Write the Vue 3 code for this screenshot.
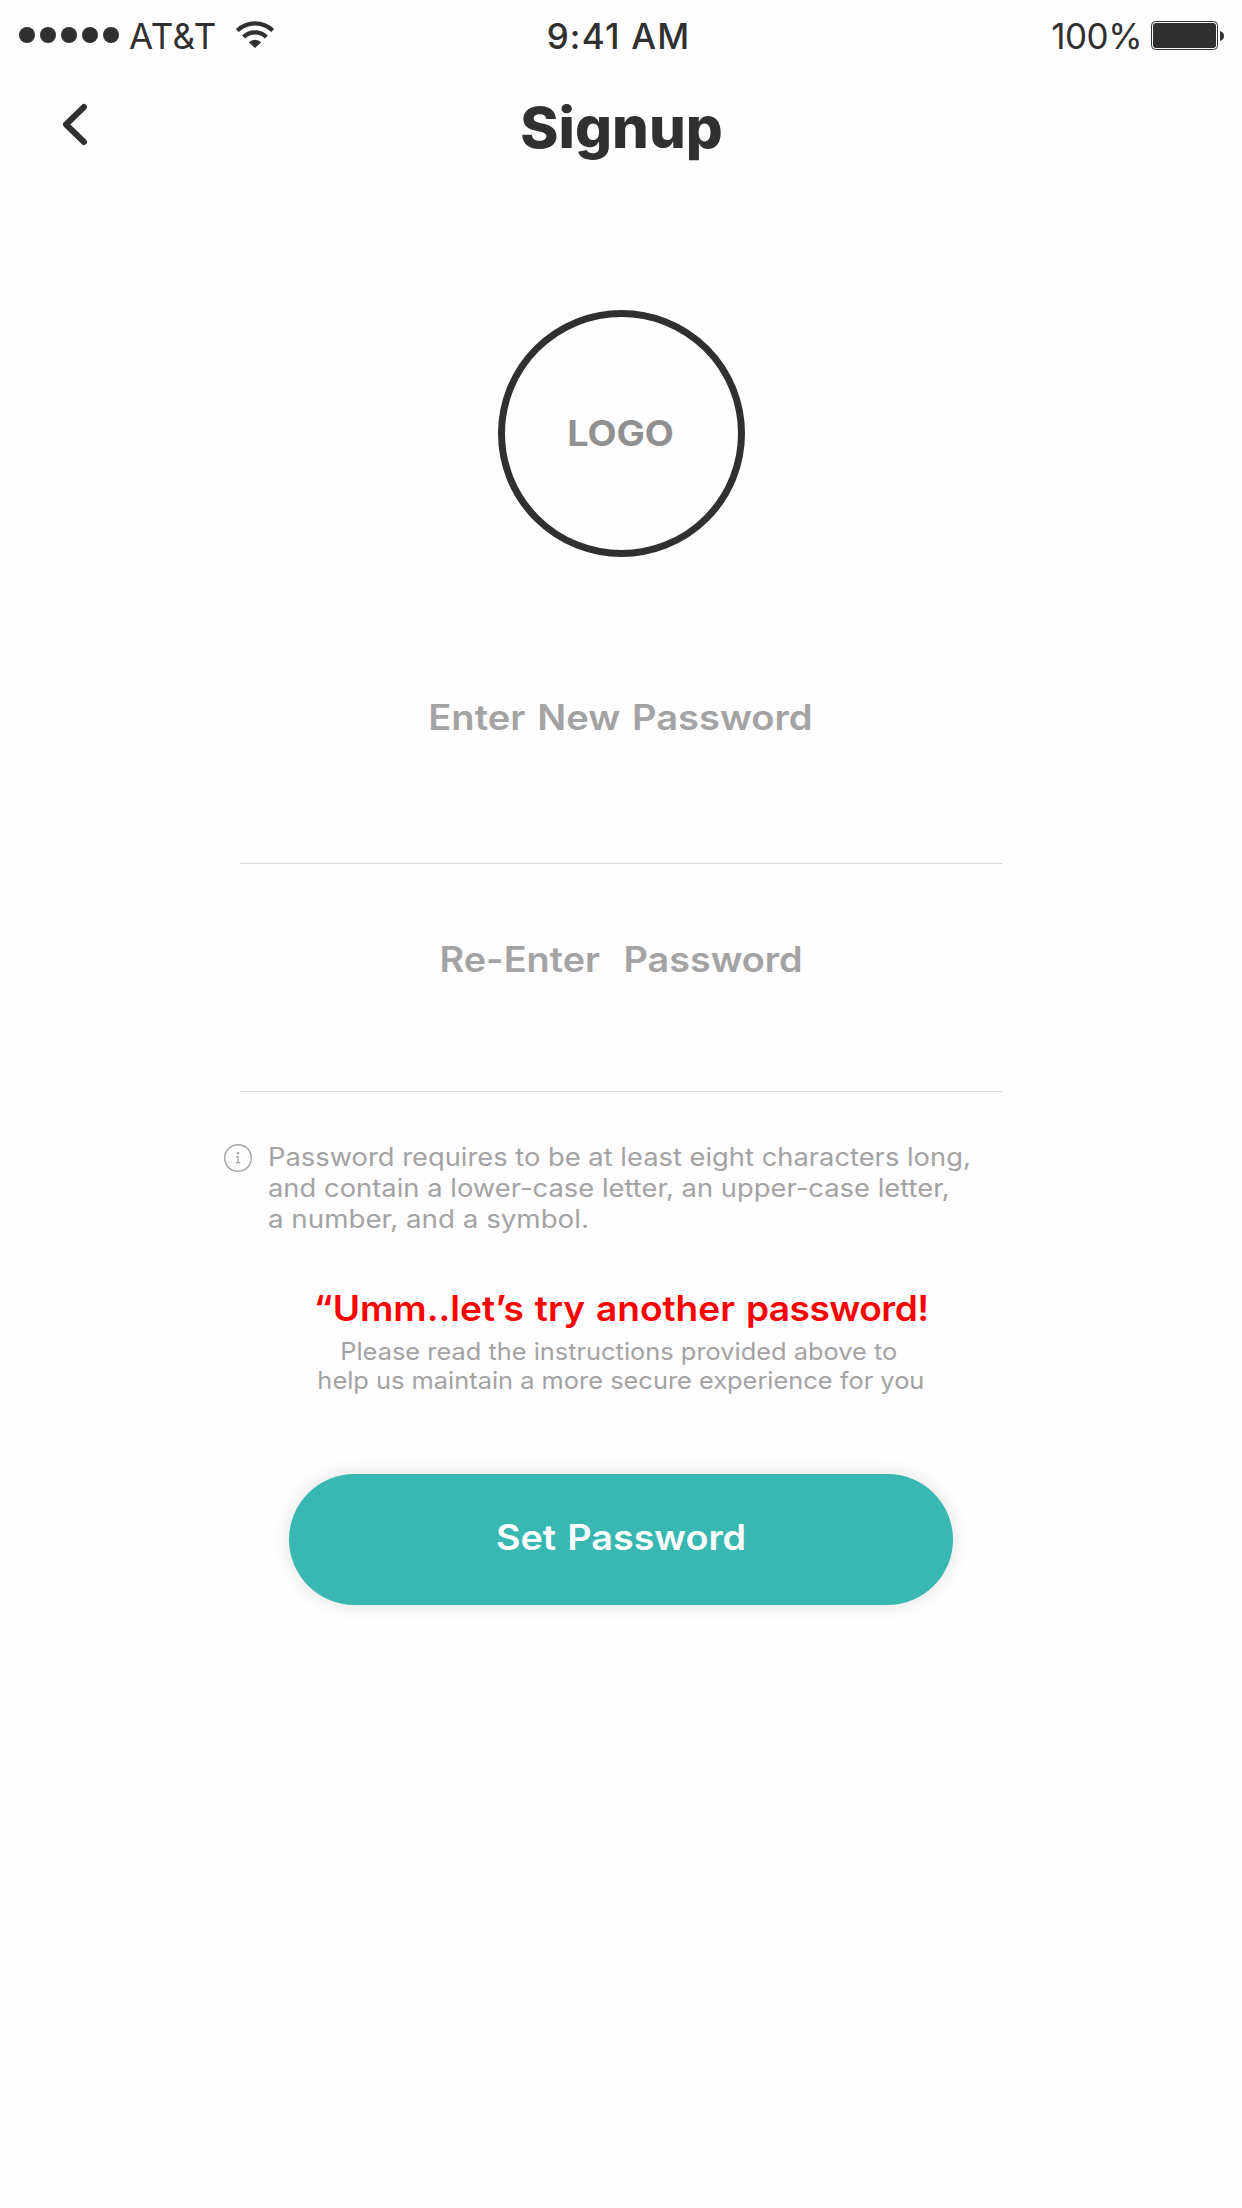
<script setup>
const requirements = [
  { text: 'Password requires to be at least eight characters long,', cls: 'tip-a' },
  { text: 'and contain a lower-case letter, an upper-case letter,', cls: 'tip-b' },
  { text: 'a number, and a symbol.', cls: 'tip-c' },
]
const help = [
  'Please read the instructions provided above to',
  'help us maintain a more secure experience for you',
]
</script>

<template>
  <div class="screen">
    <div class="status">
      <div class="carrier">
        <div class="signal"><i v-for="n in 5" :key="n"></i></div>
        <span class="network">AT&amp;T</span>
        <svg class="wifi" width="38" height="27" viewBox="0 0 38 27">
          <g fill="none" stroke="#303030" stroke-width="4.2">
            <path d="M1.3 9.6A25.3 25.3 0 0 1 36.7 9.6" />
            <path d="M7.6 16A16.2 16.2 0 0 1 30.4 16" />
          </g>
          <path d="M12.8 21.2A8.9 8.9 0 0 1 25.2 21.2L19 27Z" fill="#303030" />
        </svg>
      </div>
      <span class="time">9:41 AM</span>
      <div class="power">
        <span class="percent">100%</span>
        <svg class="battery" width="73" height="29" viewBox="0 0 73 29">
          <rect x="0.5" y="0.5" width="66" height="28" rx="4" fill="#fefefe" stroke="#303030" />
          <rect x="2" y="2" width="63" height="25" rx="3" fill="#303030" />
          <path d="M69 10C72 11 73 12.800 73 15S72 19 69 20Z" fill="#303030" />
        </svg>
      </div>
    </div>

    <header class="header">
      <svg class="back" width="26" height="43" viewBox="0 0 26 43">
        <path d="M22 4L4 21.500L22 39" fill="none" stroke="#303030" stroke-width="6" stroke-linecap="round" stroke-linejoin="round" />
      </svg>
      <h1>Signup</h1>
      <span></span>
    </header>

    <main>
      <div class="logo"><span>LOGO</span></div>

      <div class="field first"><label>Enter New Password</label></div>
      <div class="field second"><label>Re-Enter&nbsp; Password</label></div>

      <div class="tip">
        <svg class="info" width="28" height="28" viewBox="0 0 28 28">
          <circle cx="14" cy="14" r="13.300" fill="none" stroke="#a3a3a3" stroke-width="1.4" />
          <rect x="12.900" y="8" width="2.200" height="2.200" rx="0.500" fill="#a3a3a3" />
          <path d="M12 12.600H14.200V18.500M11.800 18.700H16.300" fill="none" stroke="#a3a3a3" stroke-width="1.3" />
        </svg>
        <div class="tip-lines">
          <p v-for="line in requirements" :key="line.cls" :class="line.cls">{{ line.text }}</p>
        </div>
      </div>

      <p class="error">“Umm..let’s try another <span class="tight">password!</span></p>
      <div class="help">
        <p v-for="line in help" :key="line">{{ line }}</p>
      </div>

      <button class="submit" type="button"><span>Set Password</span></button>
    </main>
  </div>
</template>

<style>
body {
  background: #fefefe;
}
</style>

<style scoped>
.screen {
  width: 1242px;
  height: 2208px;
  overflow: hidden;
  background: #fefefe;
  color: #303030;
  font-family: Inter, Montserrat, sans-serif;
}
p,
h1 {
  margin: 0;
  white-space: nowrap;
}
.status {
  display: grid;
  grid-template-columns: 1fr auto 1fr;
  align-items: center;
  height: 72px;
  padding: 0 18px 0 19px;
  box-sizing: border-box;
  font-size: 35px;
  line-height: 40px;
}
.carrier,
.power,
.signal {
  display: flex;
  align-items: center;
}
.signal {
  gap: 5px;
  margin-bottom: 2px;
}
.signal i {
  width: 16px;
  height: 16px;
  border-radius: 50%;
  background: #303030;
}
.network {
  margin-left: 10px;
  letter-spacing: 0.5px;
}
.wifi {
  margin: 0 0 3px 19px;
}
.time {
  font-weight: 500;
  letter-spacing: 1.2px;
  margin-right: 6px;
}
.power {
  justify-content: flex-end;
}
.percent {
  letter-spacing: -0.5px;
}
.battery {
  margin: 0 0 1px 9px;
}
.header {
  display: grid;
  grid-template-columns: 1fr auto 1fr;
  align-items: center;
  height: 110px;
  padding: 0 62px;
}
.back {
  margin-bottom: 5px;
}
h1 {
  padding-top: 2px;
  font-size: 57px;
  font-weight: 800;
  line-height: 70px;
  transform: scaleX(1.018);
}
main {
  display: flex;
  flex-direction: column;
  align-items: center;
}
.logo {
  display: flex;
  align-items: center;
  justify-content: center;
  box-sizing: border-box;
  width: 247px;
  height: 247px;
  margin-top: 128px;
  padding-bottom: 1px;
  border: 7px solid #303030;
  border-radius: 50%;
  color: #909090;
  font-size: 35px;
  font-weight: 700;
  line-height: 40px;
}
.logo span {
  transform: scaleX(1.078);
}
.field {
  display: flex;
  justify-content: center;
  align-items: flex-start;
  box-sizing: border-box;
  width: 762px;
  border-bottom: 1px solid #d9d9d9;
  color: #a3a3a3;
  font-size: 35px;
  font-weight: 600;
  line-height: 40px;
  word-spacing: 2px;
}
.first {
  height: 167px;
  margin-top: 140px;
  padding-right: 1px;
}
.first label {
  transform: scaleX(1.089);
}
.second {
  height: 228px;
  padding-top: 75px;
}
.second label {
  transform: scaleX(1.08);
}
.tip {
  display: flex;
  align-items: flex-start;
  align-self: flex-start;
  gap: 15.5px;
  height: 93px;
  margin: 49px 0 0 224px;
  color: #a3a3a3;
  font-size: 25px;
  line-height: 31.2px;
}
.info {
  margin-top: 3px;
}
.tip-lines {
  padding-top: 0.8px;
}
.tip-lines p {
  width: max-content;
  transform-origin: left;
}
.tip-a {
  transform: scaleX(1.093);
}
.tip-b {
  transform: scaleX(1.095);
}
.tip-c {
  transform: scaleX(1.109);
}
.error {
  margin-top: 54px;
  color: #ff0000;
  font-size: 35px;
  font-weight: 600;
  line-height: 40px;
  word-spacing: 1.5px;
  transform: scaleX(1.059);
}
.tight {
  letter-spacing: -0.5px;
}
.help {
  margin-top: 9px;
  color: #a3a3a3;
  font-size: 24px;
  line-height: 29px;
  text-align: center;
  transform: scaleX(1.058);
}
.help p:first-child {
  margin-right: 4px;
}
.submit {
  display: flex;
  align-items: center;
  justify-content: center;
  box-sizing: border-box;
  width: 664px;
  height: 131px;
  margin-top: 79px;
  padding: 0 0 5px;
  border: 0;
  border-radius: 66px;
  background: #38b8b1;
  box-shadow: 0 0 18px rgba(0, 0, 0, 0.12);
  color: #fff;
  font: 600 35px/40px Inter, Montserrat, sans-serif;
  word-spacing: 1.5px;
}
.submit span {
  transform: scaleX(1.078);
}
</style>
